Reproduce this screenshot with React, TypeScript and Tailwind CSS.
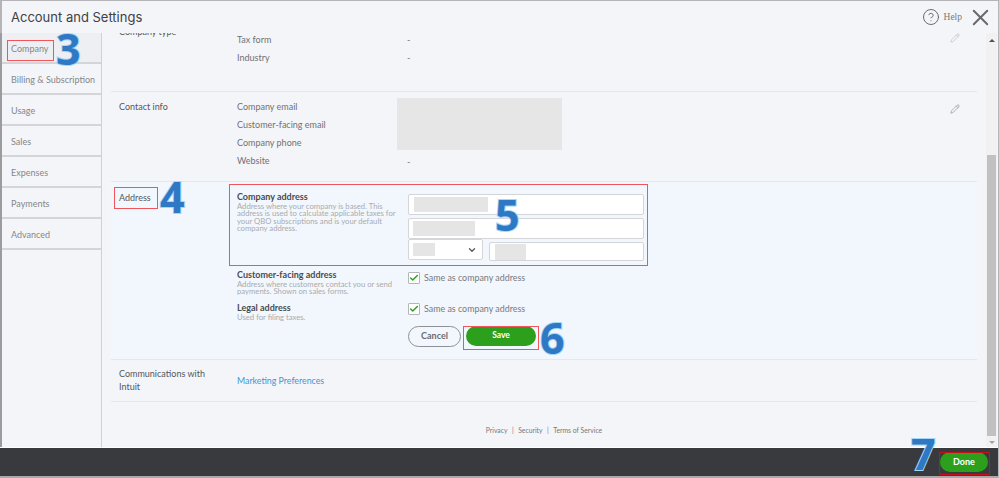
import { ChevronDown, Check, CircleHelp, Pencil, X } from "lucide-react";

const TABS = ["Company", "Billing & Subscription", "Usage", "Sales", "Expenses", "Payments", "Advanced"];

function Callout({ className }: { className: string }) {
  return <div className={`pointer-events-none absolute border border-[#f0555b] ${className}`} />;
}

function Step({ n, className }: { n: string; className: string }) {
  return (
    <span
      className={`absolute font-['Open_Sans',sans-serif] text-[43px] leading-none font-bold text-[#2f78c4] [-webkit-text-stroke:2px_#a5d6f8] [paint-order:stroke] ${className}`}
    >
      {n}
    </span>
  );
}

function FieldLabels({ labels }: { labels: string[] }) {
  return (
    <div className="flex w-[160px] flex-col gap-[8.5px]">
      {labels.map((label) => (
        <p key={label} className="h-[9.5px] leading-[9.5px]">
          {label}
        </p>
      ))}
    </div>
  );
}

function AddressBlock({ title, children }: { title: string; children: string }) {
  return (
    <div className="w-[165px]">
      <p className="text-[9px] leading-[11px] font-bold text-[#4a4b4e]">{title}</p>
      <p className="mt-[1px] text-[7.7px] leading-[7.4px] text-[#a9abae]">{children}</p>
    </div>
  );
}

function SameAs() {
  return (
    <label className="flex items-center gap-[4px]">
      <span className="flex h-[12px] w-[12px] items-center justify-center rounded-[1px] border border-[#b4b6b9] bg-white">
        <Check className="h-[10px] w-[10px] text-[#2ca01c]" strokeWidth={3.5} />
      </span>
      <span className="text-[8.9px] text-[#77797c]">Same as company address</span>
    </label>
  );
}

function TextBox({ className, fill }: { className: string; fill: string }) {
  return (
    <div className={`flex items-center rounded-[2px] border border-[#d3d5d8] bg-white ${className}`}>
      <div className={`bg-[#e5e5e5] ${fill}`} />
    </div>
  );
}

export default function App() {
  return (
    <div className="relative flex h-[478px] w-[999px] flex-col overflow-hidden border-t border-r border-[#b5b5b8] bg-[#f4f5f8] font-['Lato',sans-serif] text-[9px] text-[#707176]">
      <header className="flex h-[32px] shrink-0 items-center justify-between border-l-2 border-[#b5b5b8] pr-[7px] pl-[9px]">
        <h1 className="font-['Inter',sans-serif] text-[13px] leading-none font-normal text-[#3f4144]">
          Account and Settings
        </h1>
        <div className="flex items-center">
          <CircleHelp className="h-[18px] w-[18px] text-[#66686c]" strokeWidth={1.3} />
          <span className="ml-[4px] font-['Liberation_Serif',serif] text-[9.5px] text-[#77797c]">Help</span>
          <X className="-mr-[3px] ml-[5px] h-[27px] w-[27px] text-[#66686c]" strokeWidth={1.7} />
        </div>
      </header>

      <div className="flex min-h-0 flex-1 border-l-2 border-[#9c9c9f]">
        <nav className="w-[100px] shrink-0 border-r border-[#d0d1d4]">
          {TABS.map((tab, i) => (
            <div
              key={tab}
              className={`flex h-[31px] items-center border-b-2 border-[#d4d5d8] pt-[2px] pl-[9px] text-[9px] text-[#85878a] ${
                i === 0 ? "bg-[#eeeff2]" : ""
              }`}
            >
              {tab}
            </div>
          ))}
        </nav>

        <main className="min-w-0 flex-1 overflow-hidden px-[9px]">
          <div className="-mt-[6px] flex h-[65px] border-b border-[#e6e7ea] pl-[8px]">
            <p className="w-[118px] leading-[10px] text-[#55575a]">Company type</p>
            <div className="flex pt-[8px]">
              <FieldLabels labels={["Tax form", "Industry"]} />
              <div className="ml-[10px] flex flex-col gap-[8.5px]">
                <p className="h-[9.5px] leading-[9.5px]">-</p>
                <p className="h-[9.5px] leading-[9.5px]">-</p>
              </div>
            </div>
            <Pencil className="mt-[6px] mr-[17px] ml-auto h-[10px] w-[10px] text-[#a9abae]" strokeWidth={1.2} />
          </div>

          <div className="flex h-[90px] border-b border-[#e6e7ea] pt-[6px] pl-[8px]">
            <p className="mt-[2px] w-[118px] text-[#55575a]">Contact info</p>
            <div className="mt-[4px]">
              <FieldLabels labels={["Company email", "Customer-facing email", "Company phone", "Website"]} />
            </div>
            <div>
              <div className="h-[52px] w-[165px] bg-[#e6e6e6]" />
              <p className="mt-[5px] ml-[10px]">-</p>
            </div>
            <Pencil className="mt-[6px] mr-[17px] ml-auto h-[10px] w-[10px] text-[#77797c]" strokeWidth={1.3} />
          </div>

          <div className="flex h-[178px] border-b border-[#e6e7ea] bg-[#f2f7fd] pl-[8px]">
            <p className="mt-[9px] w-[118px] text-[#55575a]">Address</p>
            <div className="flex flex-col pt-[9px]">
              <AddressBlock title="Company address">
                Address where your company is based. This address is used to calculate applicable taxes for your QBO
                subscriptions and is your default company address.
              </AddressBlock>
              <div className="mt-[36px]">
                <AddressBlock title="Customer-facing address">
                  Address where customers contact you or send payments. Shown on sales forms.
                </AddressBlock>
              </div>
              <div className="mt-[7px]">
                <AddressBlock title="Legal address">Used for filing taxes.</AddressBlock>
              </div>
            </div>
            <div className="ml-[6px] flex w-[237px] flex-col pt-[12px]">
              <TextBox className="h-[21px] w-[236px] pl-[5px]" fill="h-[15px] w-[74px]" />
              <TextBox className="mt-[3px] h-[21px] w-[236px] pl-[4px]" fill="h-[15px] w-[62px]" />
              <div className="flex">
                <div className="flex h-[21px] w-[75px] items-center justify-between rounded-[2px] border border-[#d3d5d8] bg-white pr-[5px] pl-[4px]">
                  <div className="h-[13px] w-[22px] bg-[#e5e5e5]" />
                  <ChevronDown className="h-[10px] w-[10px] text-[#55575a]" strokeWidth={3} />
                </div>
                <TextBox className="mt-[3px] ml-[6px] h-[19px] w-[155px] pl-[5px]" fill="h-[16px] w-[31px]" />
              </div>
              <div className="mt-[10px]">
                <SameAs />
              </div>
              <div className="mt-[18px]">
                <SameAs />
              </div>
              <div className="mt-[10px] flex gap-[5px]">
                <button className="h-[21px] w-[53px] rounded-full border border-[#8d9096] text-[9px] font-bold text-[#6b6c72]">
                  Cancel
                </button>
                <button className="h-[20px] w-[70px] rounded-full bg-[#2ca01c] text-[8.5px] font-bold text-white">
                  Save
                </button>
              </div>
            </div>
          </div>

          <div className="flex h-[42px] items-center border-b border-[#e6e7ea] pl-[8px]">
            <p className="w-[118px] leading-[12.5px] text-[#55575a]">
              Communications with
              <br />
              Intuit
            </p>
            <a className="text-[8.8px] text-[#3a95d8]">Marketing Preferences</a>
          </div>

          <footer className="flex h-[46px] items-start justify-center gap-[4.5px] pt-[23px] text-[6.8px] leading-[10px] text-[#77797c]">
            <span>Privacy</span>
            <span>|</span>
            <span>Security</span>
            <span>|</span>
            <span>Terms of Service</span>
          </footer>
        </main>

        <aside className="mr-[1px] flex w-[11px] shrink-0 flex-col items-center bg-[#f1f1f1]">
          <span className="mt-[6px] h-0 w-0 border-x-[3px] border-b-[3px] border-x-transparent border-b-[#505050]" />
          <div className="mt-[113px] h-[281px] w-[9px] bg-[#c1c1c1]" />
          <span className="mt-[5px] h-0 w-0 border-x-[3px] border-t-[3px] border-x-transparent border-t-[#a3a3a3]" />
        </aside>
      </div>

      <div className="flex h-[31px] shrink-0 items-center justify-end border-t border-b-2 border-white border-b-[#a9a9ab] bg-[#393a3d] pr-[10px]">
        <button className="h-[20px] w-[48px] rounded-full bg-[#2ca01c] text-[9px] font-bold text-white">Done</button>
      </div>

      <Callout className="top-[39px] left-[7px] h-[21px] w-[47px]" />
      <Callout className="top-[186px] left-[114px] h-[22px] w-[44px]" />
      <Callout className="top-[183px] left-[229px] h-[82px] w-[419px]" />
      <Callout className="top-[325px] left-[463px] h-[24px] w-[76px]" />
      <div className="absolute top-[451px] left-[939px] h-[23px] w-[51px] border border-[#c8101a]" />

      <Step n="3" className="top-[26px] left-[56px]" />
      <Step n="4" className="top-[174px] left-[160px]" />
      <Step n="5" className="top-[192px] left-[495px]" />
      <Step n="6" className="top-[315px] left-[540px]" />
      <Step n="7" className="top-[431px] left-[911px]" />
    </div>
  );
}
